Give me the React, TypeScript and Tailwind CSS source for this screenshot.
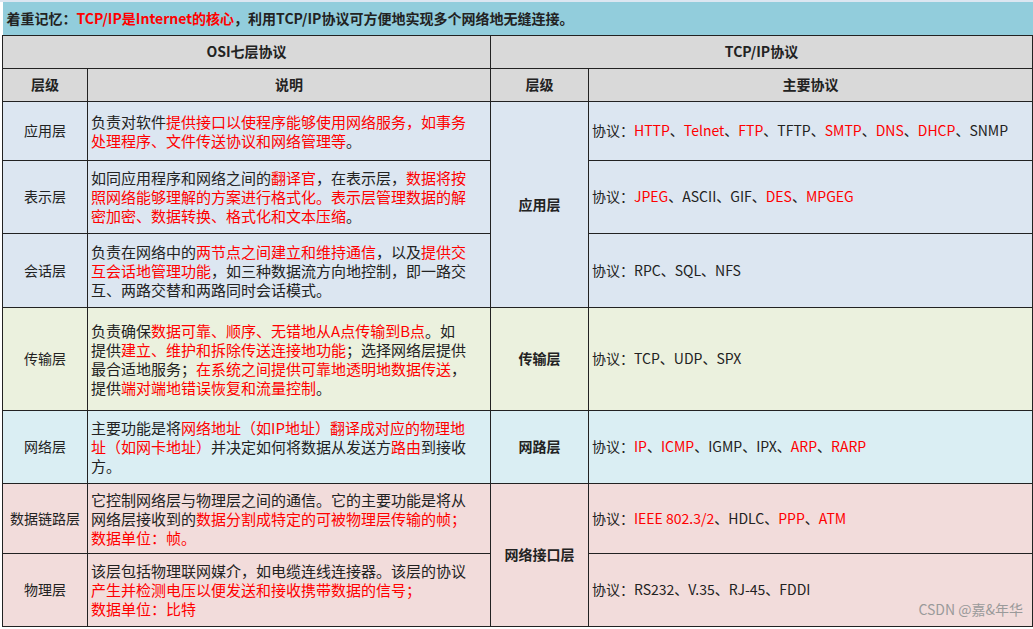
const R = ({ children }: { children: React.ReactNode }) => <span className="text-[#ff0000]">{children}</span>;

type Row = { name: string; desc: React.ReactNode; proto: React.ReactNode; bg: string; h: string };

const rows: Row[] = [
  { name: "应用层", bg: "bg-[#dce6f1]", h: "h-[59px]",
    desc: <>负责对软件<R>提供接口以使程序能够使用网络服务，如事务处理程序、文件传送协议和网络管理等</R>。</>,
    proto: <>协议：<R>HTTP</R>、<R>Telnet</R>、<R>FTP</R>、TFTP、<R>SMTP</R>、<R>DNS</R>、<R>DHCP</R>、SNMP</> },
  { name: "表示层", bg: "bg-[#dce6f1]", h: "h-[73px]",
    desc: <>如同应用程序和网络之间的<R>翻译官</R>，在表示层，<R>数据将按照网络能够理解的方案进行格式化。表示层管理数据的解密加密、数据转换、格式化和文本压缩</R>。</>,
    proto: <>协议：<R>JPEG</R>、ASCII、GIF、<R>DES</R>、<R>MPGEG</R></> },
  { name: "会话层", bg: "bg-[#dce6f1]", h: "h-[74px]",
    desc: <>负责在网络中的<R>两节点之间建立和维持通信</R>，以及<R>提供交互会话地管理功能</R>，如三种数据流方向地控制，即一路交互、两路交替和两路同时会话模式。</>,
    proto: <>协议：RPC、SQL、NFS</> },
  { name: "传输层", bg: "bg-[#ebf1de]", h: "h-[103px]",
    desc: <>负责确保<R>数据可靠、顺序、无错地从A点传输到B点</R>。如提供<R>建立、维护和拆除传送连接地功能</R>；选择网络层提供最合适地服务；<R>在系统之间提供可靠地透明地数据传送</R>，提供<R>端对端地错误恢复和流量控制</R>。</>,
    proto: <>协议：TCP、UDP、SPX</> },
  { name: "网络层", bg: "bg-[#daeef3]", h: "h-[73px]",
    desc: <>主要功能是将<R>网络地址（如IP地址）翻译成对应的物理地址（如网卡地址）</R>并决定如何将数据从发送方<R>路由</R>到接收方。</>,
    proto: <>协议：<R>IP</R>、<R>ICMP</R>、IGMP、IPX、<R>ARP</R>、<R>RARP</R></> },
  { name: "数据链路层", bg: "bg-[#f2dcdb]", h: "h-[70px]",
    desc: <>它控制网络层与物理层之间的通信。它的主要功能是将从网络层接收到的<R>数据分割成特定的可被物理层传输的帧；<br />数据单位：帧。</R></>,
    proto: <>协议：<R>IEEE 802.3/2</R>、HDLC、<R>PPP</R>、<R>ATM</R></> },
  { name: "物理层", bg: "bg-[#f2dcdb]", h: "h-[73px]",
    desc: <>该层包括物理联网媒介，如电缆连线连接器。该层的协议<R>产生并检测电压以便发送和接收携带数据的信号；<br />数据单位：比特</R></>,
    proto: <>协议：RS232、V.35、RJ-45、FDDI</> },
];

const tcp: Record<number, { label: string; span: number }> = {
  0: { label: "应用层", span: 3 },
  3: { label: "传输层", span: 1 },
  4: { label: "网路层", span: 1 },
  5: { label: "网络接口层", span: 2 },
};

export default function App() {
  const cell = "border border-[#222] px-[3px]";
  return (
    <div className="relative w-[1033px] h-[629px] bg-white overflow-hidden text-[14px] leading-[19px] text-[#222]" style={{ fontFamily: '"Noto Sans CJK SC", "Liberation Sans", sans-serif' }}>
      <div className="h-[2px] bg-[#dce6f1]" />
      <table className="w-[1031px] ml-[2px] border-collapse table-fixed">
        <colgroup>
          <col className="w-[85px]" />
          <col className="w-[403px]" />
          <col className="w-[98px]" />
          <col />
        </colgroup>
        <tbody>
          <tr className="h-[33px] bg-[#92cddc]">
            <td colSpan={4} className="border-b border-[#222] px-[4px] font-bold text-[14px]">
              着重记忆：<R>TCP/IP是Internet的核心</R>，利用TCP/IP协议可方便地实现多个网络地无缝连接。
            </td>
          </tr>
          <tr className="h-[33px] bg-[#d9d9d9] font-bold text-center">
            <td colSpan={2} className={cell}>OSI七层协议</td>
            <td colSpan={2} className={cell}>TCP/IP协议</td>
          </tr>
          <tr className="h-[33px] bg-[#d9d9d9] font-bold text-center">
            <td className={cell}>层级</td>
            <td className={cell}>说明</td>
            <td className={cell}>层级</td>
            <td className={cell}>主要协议</td>
          </tr>
          {rows.map((r, i) => (
            <tr key={r.name} className={`${r.h} ${r.bg}`}>
              <td className={`${cell} text-center`}>{r.name}</td>
              <td className={`${cell} align-middle`}>
                <div className="w-[376px] text-[15px] leading-[19px]">{r.desc}</div>
              </td>
              {tcp[i] && (
                <td rowSpan={tcp[i].span} className={`${cell} text-center font-bold ${r.bg}`}>{tcp[i].label}</td>
              )}
              <td className={cell}>{r.proto}</td>
            </tr>
          ))}
        </tbody>
      </table>
      <div className="absolute right-[10px] bottom-[10px] text-[14px] text-[#9a9a9a]">CSDN @嘉&amp;年华</div>
    </div>
  );
}
